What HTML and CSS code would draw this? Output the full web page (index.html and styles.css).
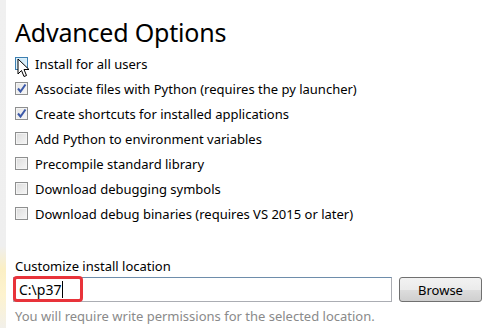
FILE: index.html
```html
<!DOCTYPE html>
<html lang="en">
<head>
    <meta charset="UTF-8">
    <title>Advanced Options</title>
    <link rel="stylesheet" href="styles.css">
</head>
<body>
    <div class="edge"></div>
    <div class="page">
        <h1>Advanced Options</h1>
        <ul class="options">
            <li><span class="box hover"></span>Install for all users
                <svg class="cursor" width="14" height="20" viewBox="0 0 14 20"><path d="M1 1 L1 16 L4.5 12.5 L7 18.5 L9.5 17.5 L7 11.5 L12 11.5 Z" fill="#fff" stroke="#000" stroke-width="1"/></svg>
            </li>
            <li><span class="box checked"><svg width="11" height="11" viewBox="0 0 11 11"><path d="M2 5.5 L4.5 8.5 L9.5 1.5" fill="none" stroke="#3c59a8" stroke-width="2"/></svg></span>Associate files with Python (requires the py launcher)</li>
            <li><span class="box checked"><svg width="11" height="11" viewBox="0 0 11 11"><path d="M2 5.5 L4.5 8.5 L9.5 1.5" fill="none" stroke="#3c59a8" stroke-width="2"/></svg></span>Create shortcuts for installed applications</li>
            <li><span class="box"></span>Add Python to environment variables</li>
            <li><span class="box"></span>Precompile standard library</li>
            <li><span class="box"></span>Download debugging symbols</li>
            <li><span class="box"></span>Download debug binaries (requires VS 2015 or later)</li>
        </ul>

        <div class="location">
            <label>Customize install location</label>
            <div class="path-row">
                <div class="path-input">
                    <span class="path-value">C:\p37</span><span class="caret"></span>
                    <span class="highlight"></span>
                </div>
                <button>Browse</button>
            </div>
            <p class="note">You will require write permissions for the selected location.</p>
        </div>
    </div>
</body>
</html>
```

FILE: styles.css
```css
body {
    margin: 0;
    width: 485px;
    height: 328px;
    overflow: hidden;
    background: #fff;
    font-family: 'Noto Sans', 'Open Sans', sans-serif;
    color: #000;
    position: relative;
}
.edge {
    position: absolute;
    left: 0;
    top: 0;
    width: 6px;
    height: 328px;
    background: linear-gradient(to bottom, #f0f0f0 0%, #efefef 75%, #fbefc4 82%, #fdf3cf 90%, #f2f0ea 100%);
}
.page {
    padding: 15px 0 0 15px;
}
h1 {
    margin: 0;
    font-weight: normal;
    font-size: 25px;
    line-height: 34px;
    letter-spacing: -0.2px;
}
.options {
    list-style: none;
    margin: 2px 0 0;
    padding: 0;
}
.options li {
    display: flex;
    align-items: center;
    height: 25px;
    font-size: 13px;
    position: relative;
}
.box {
    width: 11px;
    height: 11px;
    border: 1px solid #8e8f8f;
    background: linear-gradient(135deg, #dcdcdc, #f6f6f6);
    box-shadow: inset 0 0 0 1px #f4f4f4;
    margin-right: 7px;
    flex: none;
    display: flex;
}
.box.checked {
    background: linear-gradient(135deg, #e4e4e4, #f8f8f8);
}
.box.hover {
    border-color: #3c7fb1;
    background: linear-gradient(135deg, #c2e4f6, #e9f6fd);
    box-shadow: inset 0 0 0 1px #def0fa;
}
.cursor {
    position: absolute;
    left: 2px;
    top: 7px;
}
.location {
    margin-top: 31px;
}
.location label {
    display: block;
    font-size: 13px;
    line-height: 18px;
}
.path-row {
    display: flex;
    align-items: center;
    margin-left: -2px;
    margin-top: 2px;
}
.path-input {
    position: relative;
    box-sizing: border-box;
    width: 379px;
    height: 25px;
    border: 1px solid #abadb3;
    border-top-color: #6e8dab;
    display: flex;
    align-items: center;
    padding-left: 5px;
    font-size: 14px;
}
.caret {
    width: 1px;
    height: 17px;
    background: #000;
    margin-left: 1px;
}
.highlight {
    position: absolute;
    left: -1px;
    top: -2px;
    width: 64px;
    height: 20px;
    border: 3px solid #e8333a;
    border-radius: 4px;
}
button {
    margin-left: 7px;
    width: 83px;
    height: 25px;
    border: 1px solid #707070;
    border-radius: 3px;
    background: linear-gradient(to bottom, #f2f2f2 0%, #ebebeb 50%, #dddddd 51%, #cfcfcf 100%);
    font-family: inherit;
    font-size: 13px;
    color: #000;
    padding: 0;
}
.note {
    margin: 5px 0 0;
    font-size: 13px;
    line-height: 18px;
    color: #8a8a8a;
}
```
